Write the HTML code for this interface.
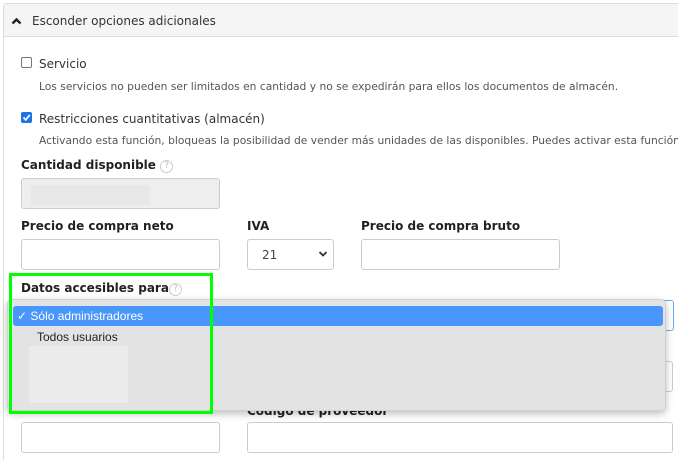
<!DOCTYPE html>
<html style="overflow:hidden;width:678px;height:460px"><head><style>
*{box-sizing:border-box;margin:0;padding:0}
body{width:678px;height:460px;overflow:hidden;background:#fff;font-family:"DejaVu Sans","Liberation Sans",sans-serif;color:#333;position:relative}
.a{position:absolute}
.frame{left:3px;top:3px;width:690px;height:470px;border:1px solid #ddd;border-radius:3px}
.hdr{left:4px;top:4px;width:690px;height:33px;background:#f5f5f5;border-bottom:1px solid #ddd}
.t13{font-size:12px;white-space:nowrap}
.t11{font-size:10.7px;color:#555;white-space:nowrap}
.b{font-weight:bold;font-size:12px;color:#222;white-space:nowrap}
.inp{border:1px solid #ccc;border-radius:3px;background:#fff}
.q{display:inline-block;width:13px;height:13px;border:1px solid #ccc;border-radius:50%;font-size:9px;color:#bbb;text-align:center;line-height:11px;font-weight:normal;vertical-align:1px}
</style></head><body>
<div class="a frame"></div>
<div class="a hdr"></div>
<svg class="a" style="left:11px;top:17px" width="11" height="8"><path d="M1.5 6.5L5.5 2.5L9.5 6.5" stroke="#222" stroke-width="2.4" fill="none"/></svg>
<div class="a t13" style="left:32px;top:14px">Esconder opciones adicionales</div>

<div class="a" style="left:21px;top:57px;width:11px;height:11px;border:1px solid #777;border-radius:2px;background:#fff"></div>
<div class="a t13" style="left:39px;top:57px">Servicio</div>
<div class="a t11" style="left:39px;top:80px">Los servicios no pueden ser limitados en cantidad y no se expedirán para ellos los documentos de almacén.</div>

<div class="a" style="left:21px;top:112px;width:11px;height:11px;border-radius:2px;background:#1a73e8"></div>
<svg class="a" style="left:21px;top:112px" width="11" height="11"><path d="M2.5 5.5L4.7 7.8L8.7 3" stroke="#fff" stroke-width="1.8" fill="none"/></svg>
<div class="a t13" style="left:39px;top:112px">Restricciones cuantitativas (almacén)</div>
<div class="a t11" style="left:39px;top:134px">Activando esta función, bloqueas la posibilidad de vender más unidades de las disponibles. Puedes activar esta función</div>

<div class="a b" style="left:21px;top:158px">Cantidad disponible <span class="q">?</span></div>
<div class="a" style="left:21px;top:178px;width:199px;height:31px;border:1px solid #ccc;border-radius:3px;background:#eee"></div>
<div class="a" style="left:31px;top:185px;width:119px;height:20px;background:#e8e8e8"></div>

<div class="a b" style="left:21px;top:219px">Precio de compra neto</div>
<div class="a b" style="left:247px;top:219px">IVA</div>
<div class="a b" style="left:361px;top:219px">Precio de compra bruto</div>
<div class="a inp" style="left:21px;top:239px;width:199px;height:31px"></div>
<div class="a inp" style="left:247px;top:239px;width:87px;height:31px"></div>
<div class="a t13" style="left:262px;top:248px;color:#444">21</div>
<svg class="a" style="left:318px;top:250px" width="10" height="8"><path d="M1.5 2L5 5.5L8.5 2" stroke="#333" stroke-width="1.8" fill="none"/></svg>
<div class="a inp" style="left:361px;top:239px;width:199px;height:31px"></div>

<div class="a b" style="left:21px;top:281px">Datos accesibles para<span class="q">?</span></div>
<div class="a" style="left:21px;top:300px;width:653px;height:31px;border:1px solid #6fa8f0;border-radius:3px;background:#fff"></div>
<div class="a inp" style="left:300px;top:361px;width:373px;height:31px"></div>
<div class="a b" style="left:247px;top:404px">Código de proveedor</div>
<div class="a inp" style="left:21px;top:422px;width:199px;height:31px"></div>
<div class="a inp" style="left:247px;top:422px;width:426px;height:31px"></div>

<div class="a" style="left:7px;top:299px;width:659px;height:112px;background:#e3e3e3;border:1px solid #d0d0d0;border-radius:5px;box-shadow:0 3px 8px rgba(0,0,0,.25)"></div>
<div class="a" style="left:13px;top:306px;width:650px;height:20px;background:#4a97fb;border-radius:3px"></div>
<div class="a" style="left:17px;top:309px;color:#fff;font-family:'Liberation Sans',sans-serif;font-size:12px">✓ Sólo administradores</div>
<div class="a" style="left:37px;top:330px;font-size:12px;color:#222;font-family:'Liberation Sans',sans-serif">Todos usuarios</div>
<div class="a" style="left:29px;top:346px;width:99px;height:57px;background:#ebebeb"></div>

<div class="a" style="left:9px;top:273px;width:204px;height:141px;border:3px solid #00ff00"></div>
</body></html>
